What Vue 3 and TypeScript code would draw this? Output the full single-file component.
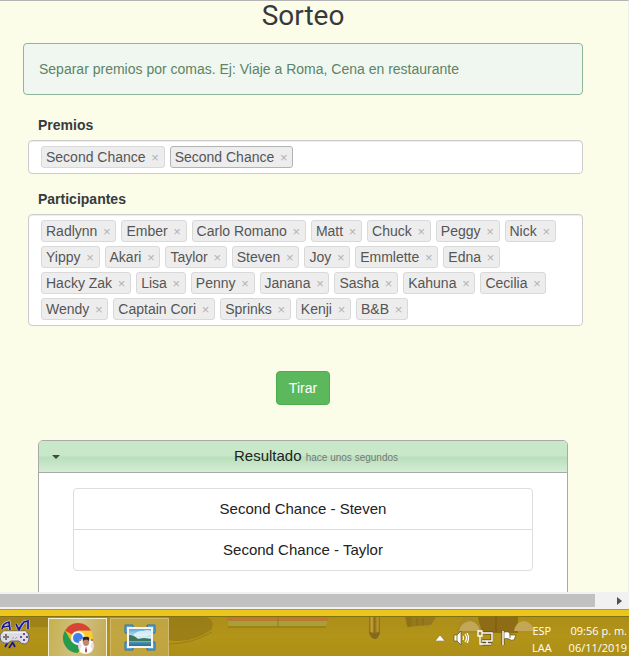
<script setup lang="ts">
import { ref } from 'vue'

interface Tag {
  name: string
  active?: boolean
}

const prizes = ref<Tag[]>([{ name: 'Second Chance' }, { name: 'Second Chance', active: true }])

const people = ref<Tag[]>(
  [
    'Radlynn', 'Ember', 'Carlo Romano', 'Matt', 'Chuck', 'Peggy', 'Nick',
    'Yippy', 'Akari', 'Taylor', 'Steven', 'Joy', 'Emmlette', 'Edna',
    'Hacky Zak', 'Lisa', 'Penny', 'Janana', 'Sasha', 'Kahuna', 'Cecilia',
    'Wendy', 'Captain Cori', 'Sprinks', 'Kenji', 'B&B',
  ].map((name) => ({ name })),
)

const results = ref<string[]>(['Second Chance - Steven', 'Second Chance - Taylor'])
const open = ref(true)

function remove(list: Tag[], index: number): void {
  list.splice(index, 1)
}

function draw(): void {
  const pool = people.value.map((p) => p.name).sort(() => Math.random() - 0.5)
  results.value = prizes.value.map((p, i) => `${p.name} - ${pool[i] ?? ''}`)
}
</script>

<template>
  <div class="screen">
    <main class="page">
      <h1>Sorteo</h1>
      <p class="notice">Separar premios por comas. Ej: Viaje a Roma, Cena en restaurante</p>

      <form class="form" @submit.prevent="draw">
        <div class="group">
          <label for="prizes">Premios</label>
          <div class="tags">
            <span v-for="(t, i) in prizes" :key="i" class="tag" :class="{ active: t.active }">
              {{ t.name }}<button type="button" class="close" @click="remove(prizes, i)">×</button>
            </span>
            <input id="prizes" type="text" class="entry" />
          </div>
        </div>
        <div class="group">
          <label for="people">Participantes</label>
          <div class="tags">
            <span v-for="(t, i) in people" :key="i" class="tag">
              {{ t.name }}<button type="button" class="close" @click="remove(people, i)">×</button>
            </span>
            <input id="people" type="text" class="entry" />
          </div>
        </div>
        <button type="submit" class="go">Tirar</button>
      </form>

      <section class="panel">
        <button type="button" class="head" @click="open = !open">
          <svg class="caret" width="8" height="4" viewBox="0 0 8 4"><path d="M0 0h8L4 4z" fill="#454545" /></svg>
          <span class="title">Resultado <small>hace unos segundos</small></span>
        </button>
        <div v-if="open" class="body">
          <ul>
            <li v-for="(r, i) in results" :key="i">{{ r }}</li>
          </ul>
        </div>
      </section>
    </main>

    <div class="scroll">
      <div class="thumb"></div>
      <button type="button" class="arrow" aria-label="Desplazar">
        <svg width="5" height="8" viewBox="0 0 5 8"><path d="M0 0v8l5-4z" fill="#505050" /></svg>
      </button>
    </div>
    <div class="frame"></div>

    <footer class="taskbar">
      <svg class="scene" width="629" height="39" viewBox="0 0 629 39">
        <defs>
          <filter id="soft"><feGaussianBlur stdDeviation="0.7" /></filter>
          <linearGradient id="shell" x1="0" x2="1" y1="0" y2="0">
            <stop offset="0" stop-color="#86691a" />
            <stop offset="0.25" stop-color="#c7a63a" />
            <stop offset="0.5" stop-color="#8a6c12" />
            <stop offset="0.8" stop-color="#bd9a2e" />
            <stop offset="1" stop-color="#86691a" />
          </linearGradient>
        </defs>
        <g filter="url(#soft)">
          <path d="M0 0h48v10H0z" fill="#8c7114" opacity="0.45" />
          <path d="M168 0h38q10 4 5 13-20 14-43 10z" fill="#876b10" opacity="0.5" />
          <path d="M168 27q24 0 44-12" fill="none" stroke="#9a7d1c" />
          <path d="M226 0h103l-3 9H229z" fill="#a6a03a" />
          <path d="M226 0h103l-1 4H227z" fill="#bd7a2e" />
          <path d="M278 0v9" stroke="#917827" />
          <path d="M228 10h98" stroke="#89760f" />
          <path d="M369 0h11v14q-1 8-5 8-5 0-6-8z" fill="url(#shell)" />
          <path d="M369 14q5 4 11 0-1 8-5 8-5 0-6-8z" fill="#86691a" />
          <path d="M405 0l2 10 24-2 5-8z" fill="#96791a" />
          <path d="M411 1v7M417 1v7M423 1v7" stroke="#876a14" />
          <path d="M406 0h5v10h-3z" fill="#8d7114" />
          <path d="M478 0h40v16h-37z" fill="#8e6c12" />
          <path d="M496 0v15" stroke="#775810" />
          <path d="M457 16q1-15 12-16 11 1 13 16z" fill="#a98b27" />
          <path d="M459 14q2-9 11-10 8 1 10 10z" fill="#c2a757" />
          <path d="M514 14q2-10 10-10 8 1 10 10z" fill="#c2a757" />
        </g>
      </svg>

      <a href="#" class="pad" aria-label="Gamepad">
        <svg width="30" height="32" viewBox="0 0 30 32">
          <path d="M2 9q1-6 7-7l1 8M3 7l7-1M16 4l3 6 3-6M18 10l6-8 4-1v8" fill="none" stroke="#d2cde2" stroke-width="3" />
          <path d="M2 9q1-6 7-7l1 8M3 7l7-1M16 4l3 6 3-6M18 10l6-8 4-1v8M8 22l-3 5M13 22l-4 6M13 23l2 4" fill="none" stroke="#17178f" stroke-width="1.700" />
          <path d="M5 11h20q4 1 4 6 0 6-4 7-4 0-6-3h-8q-3 3-7 2-4-1-4-6 0-5 5-6z" fill="#dcdce2" stroke="#666574" />
          <path d="M3 12h23" stroke="#fff" />
          <path d="M3 17h6M6 14v6" stroke="#77767f" stroke-width="2" />
          <path d="M12 19l2-2M15 19l2-2" stroke="#a5a4ad" stroke-width="1" />
          <path d="M23 13h2v2h-2zM20 16h2v2h-2zM26 16h2v2h-2zM23 19h2v2h-2z" fill="#704b9c" />
        </svg>
      </a>
      <a href="#" class="app on" aria-label="Chrome">
        <svg width="32" height="32" viewBox="0 0 32 32">
          <circle cx="16" cy="16" r="15" fill="#e5bd28" />
          <path d="M16 16L3 8.500A15 15 0 0 1 29 8.500H16z" fill="#d94334" />
          <path d="M3 8.500A15 15 0 0 0 16 31L22.500 19.700 16 23l-6.500-3.200z" fill="#259a50" />
          <path d="M16 9h13.200A15 15 0 0 1 16 31l6.500-11.200z" fill="#fbcb35" />
          <circle cx="16" cy="16" r="7" fill="#f3f2f0" />
          <circle cx="16" cy="16" r="5" fill="#3f7fe9" />
          <circle cx="24" cy="24" r="8" fill="#e7e0dc" />
          <path d="M18 30q0-6 4-7h4q4 1 4 6-6 5-12 1z" fill="#fff" />
          <path d="M18 18l3 7M30 18l-3 7" stroke="#fff" stroke-width="2" />
          <path d="M17 18h2M29 18h2" stroke="#b77c60" stroke-width="2" />
          <ellipse cx="24" cy="20" rx="3" ry="4" fill="#bd896e" />
          <path d="M21 19q-1-5 3-4 4-1 3 4-3-3-6 0z" fill="#30211d" />
          <path d="M24 24l-1 5 1 2 1-2z" fill="#9b3045" />
        </svg>
      </a>
      <a href="#" class="app" aria-label="Imagen">
        <svg width="32" height="27" viewBox="0 0 32 27">
          <defs>
            <linearGradient id="sky" x1="0" x2="0" y1="0" y2="1">
              <stop offset="0" stop-color="#4d9be0" />
              <stop offset="0.5" stop-color="#d6eef6" />
              <stop offset="0.7" stop-color="#5199b9" />
              <stop offset="1" stop-color="#20648f" />
            </linearGradient>
          </defs>
          <path d="M1 1h8v3H4v5H1zM23 1h8v8h-3V4h-5zM1 18h3v5h5v3H1zM28 18h3v8h-8v-3h5z" fill="#5aa3dc" stroke="#2c73ac" />
          <path d="M4 4h24v19H4z" fill="url(#sky)" stroke="#f5f5ef" stroke-width="2" />
          <path d="M10 10q5-4 9-3 5-2 8 0v4q-8 2-17 1z" fill="#eef8fc" opacity="0.75" />
          <path d="M5 11q5 0 9 4l6-1 7 1v2H5z" fill="#3f7757" />
          <path d="M5 17h22v1H5z" fill="#6bb3bc" />
        </svg>
      </a>

      <div class="tray">
        <svg width="10" height="6" viewBox="0 0 10 6"><path d="M0 6l5-6 5 6z" fill="#fff" stroke="#746014" stroke-width="0.5" /></svg>
        <svg width="16" height="16" viewBox="0 0 16 16">
          <path d="M1 5h3l4-4v14l-4-4H1z" fill="#fff" stroke="#60501a" stroke-width="0.7" />
          <path d="M4 5v6" stroke="#907b29" />
          <path d="M10 6q1 2 0 4M12 4q3 4 0 8M14 3q3 5 0 10" fill="none" stroke="#fff" stroke-width="1.200" />
        </svg>
        <svg width="16" height="16" viewBox="0 0 16 16">
          <path d="M5 3h10v8H5M10 11v3M5 14h9" fill="none" stroke="#5b4b16" stroke-width="3" />
          <path d="M5 3h10v8H5M10 11v3M5 14h9" fill="none" stroke="#fff" stroke-width="1.500" />
          <path d="M1 1h4v5H1zM3 6v8h3" fill="#a38925" stroke="#fff" stroke-width="1.300" />
        </svg>
        <svg width="16" height="16" viewBox="0 0 16 16">
          <path d="M2 1v14" stroke="#5b4b16" stroke-width="3" />
          <path d="M3 2q4-1 6 1v2h6l-2 5q-3 1-5-1-3-1-5 0z" fill="#fff" stroke="#5b4b16" stroke-width="0.700" />
          <path d="M2 1v14" stroke="#fff" stroke-width="1.500" />
          <path d="M9 3v5" stroke="#8b762b" />
        </svg>
      </div>
      <div class="lang"><span>ESP</span><span>LAA</span></div>
      <div class="clock"><time>09:56 p. m.</time><time>06/11/2019</time></div>
    </footer>
  </div>
</template>

<style>
body {
  margin: 0;
}
</style>

<style scoped>
* {
  box-sizing: border-box;
}
.screen {
  display: flex;
  flex-direction: column;
  height: 100vh;
  overflow: hidden;
  font: 14px/20px 'Liberation Sans', Arial, sans-serif;
  color: #373a3c;
}
button,
input {
  font: inherit;
  border: 0;
  padding: 0;
  margin: 0;
  background: none;
}
.page {
  flex: 1;
  min-height: 0;
  overflow: hidden;
  padding: 0 45px 0 23px;
  background: #fbfde9;
  border-top: 1px solid #b4b4b4;
  border-right: 1px solid #eeeeee;
}
h1 {
  margin: 0 0 12px;
  font: 400 28px/30px Roboto, sans-serif;
  text-align: center;
}
.notice {
  margin: 0 0 20px;
  padding: 15px;
  border: 1px solid #8fb596;
  border-radius: 4px;
  background: #f0f7f1;
  color: #5d8464;
}
.form {
  display: flex;
  flex-direction: column;
  padding-left: 5px;
}
.group {
  display: flex;
  flex-direction: column;
  gap: 5px;
  margin-bottom: 15px;
}
label {
  padding-left: 10px;
  font-weight: 700;
}
.tags {
  display: flex;
  flex-wrap: wrap;
  gap: 4px 5px;
  padding: 5px 12px;
  border: 1px solid #cccccc;
  border-radius: 4px;
  background: #fff;
  box-shadow: inset 0 1px 1px rgba(0, 0, 0, 0.075);
}
.tag {
  display: flex;
  height: 22px;
  padding-left: 4px;
  border: 1px solid #d9d9d9;
  border-radius: 3px;
  background: #ededed;
  color: #555;
  white-space: nowrap;
}
.tag.active {
  border-color: #b3b3b3;
}
.close {
  width: 18px;
  padding-left: 1px;
  font-size: 13px;
  line-height: 21px;
  color: #b2b2b2;
}
.entry {
  flex: 1 1 20px;
  min-width: 0;
  height: 22px;
  outline: 0;
}
.go {
  align-self: center;
  margin: 30px 5px 35px 0;
  padding: 6px 12px;
  border: 1px solid #4cae4c;
  border-radius: 4px;
  background: #5cb85c;
  color: #fff;
}
.panel {
  margin: 0 15px;
  border: 1px solid #a9a9a9;
  border-radius: 5px;
  background: #fff;
  color: #222;
  font-size: 15px;
  min-height: 200px;
}
.head {
  display: flex;
  align-items: center;
  width: 100%;
  height: 32px;
  padding: 0 13px;
  border-bottom: 1px solid #a9a9a9;
  border-radius: 4px 4px 0 0;
  background: linear-gradient(#c9e7c9 0 48%, #b8dfba 52%, #d6edd6);
  color: #222;
}
.title {
  flex: 1;
  padding-left: 18px;
  text-align: center;
}
small {
  font-size: 10px;
  color: #777;
}
.body {
  padding: 15px 34px;
}
ul {
  margin: 0;
  padding: 0;
  list-style: none;
  border: 1px solid #dddddd;
  border-radius: 4px;
}
li {
  padding: 10px 15px;
  text-align: center;
}
li + li {
  border-top: 1px solid #dddddd;
}
.scroll {
  display: flex;
  flex: none;
  height: 17px;
  padding: 2px 0;
  background: #f1f1f1;
}
.thumb {
  flex: 1;
  background: #c1c1c1;
}
.arrow {
  display: flex;
  align-items: center;
  justify-content: center;
  width: 34px;
  padding-left: 14px;
}
.frame {
  flex: none;
  height: 7px;
  background: #ebc51c;
  border-top: 1px solid #bc9b16;
}
.taskbar {
  position: relative;
  display: flex;
  flex: none;
  height: 40px;
  overflow: hidden;
  border-top: 1px solid #85700f;
  background: linear-gradient(#ac8e1a, #b29418 50%, #ad8f17);
  color: #fff;
}
.scene {
  position: absolute;
  left: 0;
  top: 0;
}
.pad,
.app,
.tray,
.lang,
.clock {
  position: relative;
  display: flex;
}
.pad {
  width: 48px;
  padding-top: 3px;
}
.app {
  width: 59px;
  height: 39px;
  margin: 1px 3px 0 0;
  align-items: center;
  justify-content: center;
  border: 1px solid #d0b971;
  background: rgba(208, 184, 105, 0.5);
}
.app.on {
  border-color: #f3edd2;
  background: linear-gradient(100deg, #c5b04f, #d0c183 50%, #c3aa55);
}
.tray {
  flex: 1;
  align-items: center;
  justify-content: flex-end;
  gap: 8px;
  padding: 2px 15px 0 0;
}
.lang,
.clock {
  flex-direction: column;
  justify-content: center;
  padding-top: 4px;
  font: 11px/17px 'Open Sans', sans-serif;
}
.lang {
  align-items: center;
  margin-right: 17px;
}
.clock {
  align-items: flex-end;
  padding-right: 2px;
}
</style>
